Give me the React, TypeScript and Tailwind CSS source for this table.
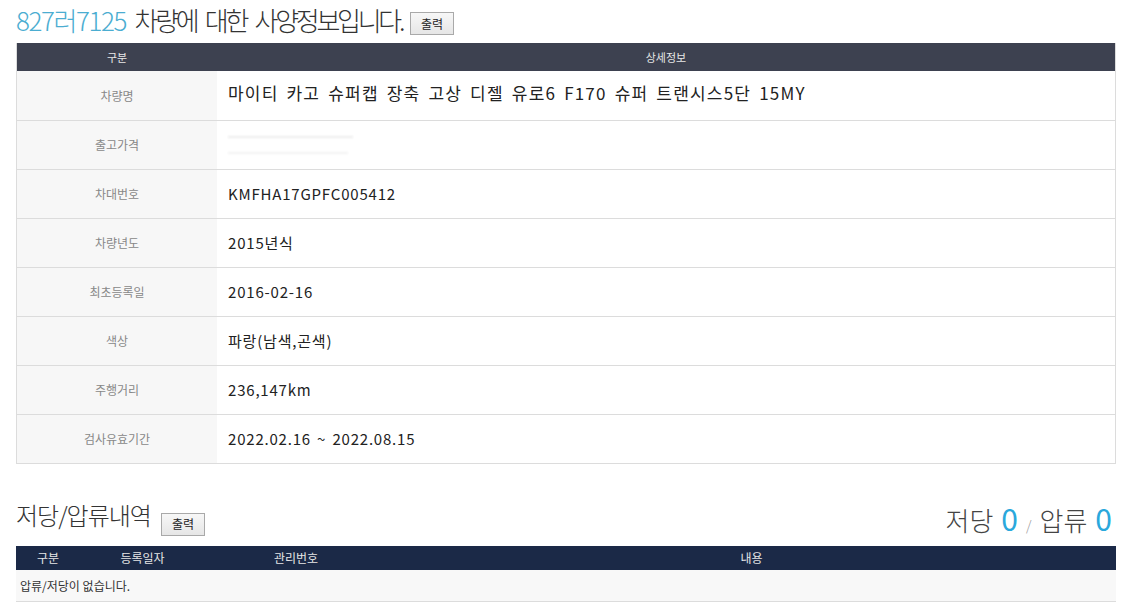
import type { FC } from "react";

const specRows = [
	{ label: "차량명", value: "마이티 카고 슈퍼캡 장축 고상 디젤 유로6 F170 슈퍼 트랜시스5단 15MY", big: true },
	{ label: "출고가격", value: "", hidden: true },
	{ label: "차대번호", value: "KMFHA17GPFC005412" },
	{ label: "차량년도", value: "2015년식" },
	{ label: "최초등록일", value: "2016-02-16" },
	{ label: "색상", value: "파랑(남색,곤색)" },
	{ label: "주행거리", value: "236,147km" },
	{ label: "검사유효기간", value: "2022.02.16 ~ 2022.08.15" },
];

const font = "font-['Noto_Sans_CJK_KR','Noto_Sans',sans-serif]";

const PrintButton: FC = () => (
	<button className="h-[23px] w-[44px] border border-[#a9a9a9] bg-gradient-to-b from-[#f7f7f7] to-[#e6e6e6] text-[12px] leading-none text-[#222]">
		출력
	</button>
);

const App: FC = () => {
	return (
		<div className={`${font} min-h-[614px] w-[1124px] bg-white px-4`}>
			{/* Title */}
			<div className="flex h-[43px] items-center gap-[8px] pb-[4px]">
				<h1 className="text-[26px] font-light leading-none tracking-[-3.3px] [word-spacing:6px] text-[#333]">
					<span className="tracking-[-1.4px] text-[#4badd1]">827러7125</span>{" "}
					차량에 대한 사양정보입니다.
				</h1>
				<div className="pt-[6px]">
					<PrintButton />
				</div>
			</div>

			{/* Spec table */}
			<div className="w-[1100px] border-x border-b border-[#dcdcdc]">
				<div className="flex h-[28px] items-center bg-[#3d4150] text-[11px] text-[#e8e8e8]">
					<div className="w-[200px] text-center">구분</div>
					<div className="flex-1 text-center">상세정보</div>
				</div>
				{specRows.map((row, i) => (
					<div
						key={row.label}
						className={`flex h-[49px] ${i > 0 ? "border-t border-[#dcdcdc]" : ""}`}
					>
						<div className="flex w-[200px] items-center justify-center bg-[#f7f7f7] text-[12px] text-[#888]">
							{row.label}
						</div>
						<div className="flex flex-1 items-center pl-[11px]">
							{row.hidden ? (
								<div className="flex flex-col gap-[14px] blur-[1px]">
									<div className="h-[2px] w-[125px] bg-[#ececec]" />
									<div className="h-[2px] w-[120px] bg-[#f2f2f2]" />
								</div>
							) : (
								<span
									className={
										row.big
											? "pb-[6px] text-[17px] tracking-[1.2px] [word-spacing:3px] text-[#222]"
											: "text-[15px] tracking-[0.8px] [word-spacing:2px] text-[#222]"
									}
								>
									{row.value}
								</span>
							)}
						</div>
					</div>
				))}
			</div>

			{/* Mortgage / seizure */}
			<div className="mt-[39px] flex h-[43px] w-[1100px] items-start justify-between">
				<div className="flex items-start gap-[10px]">
					<h2 className="text-[24px] font-light leading-none tracking-[-1px] text-[#333]">
						저당/압류내역
					</h2>
					<div className="pt-[7px]">
						<PrintButton />
					</div>
				</div>
				<div className="flex items-baseline gap-[8px] pr-[4px] text-[26px] font-light leading-none text-[#444]">
					<span>저당</span>
					<span className="text-[30px] font-normal text-[#2aa8dc]">0</span>
					<span className="text-[14px] text-[#999]">/</span>
					<span>압류</span>
					<span className="text-[30px] font-normal text-[#2aa8dc]">0</span>
				</div>
			</div>
			<div className="w-[1100px]">
				<div className="flex h-[24px] items-center bg-[#1b2947] text-[12px] text-[#e6e6e6]">
					<div className="w-[64px] text-center">구분</div>
					<div className="w-[125px] text-center">등록일자</div>
					<div className="w-[182px] text-center">관리번호</div>
					<div className="flex-1 text-center">내용</div>
				</div>
				<div className="flex h-[32px] items-center border-b border-[#dcdcdc] bg-[#f8f8f8] pl-[4px] text-[12px] text-[#333]">
					압류/저당이 없습니다.
				</div>
			</div>
		</div>
	);
};

export default App;
